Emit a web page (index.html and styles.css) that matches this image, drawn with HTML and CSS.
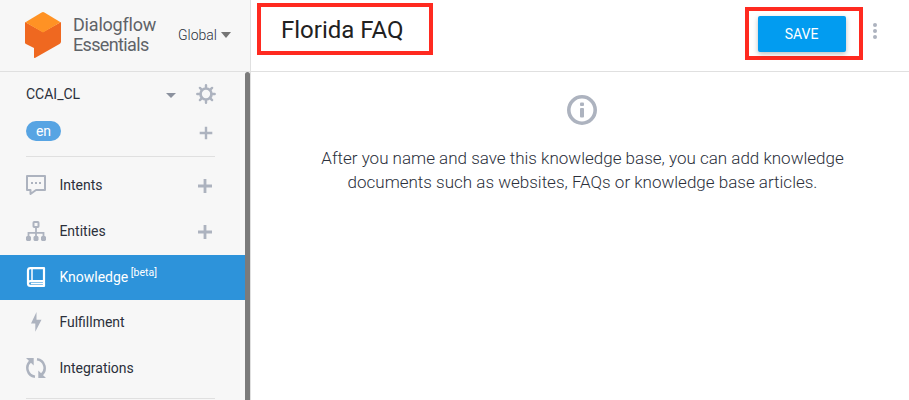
FILE: index.html
```html
<!DOCTYPE html>
<html lang="en">
<head>
<meta charset="utf-8">
<title>Dialogflow Essentials</title>
<link rel="stylesheet" href="styles.css">
</head>
<body>
<div class="app">
  <aside class="sidebar">
    <header class="brand">
      <svg class="logo" width="36" height="46" viewBox="0 0 36 46">
        <path fill="#ef6820" d="M0 10v20.500q0 1 1 1.600L9 36v9q0 1.500 1.300.8L34.500 32q1.500-.9 1.500-2.500V10L18 20z"/>
        <path fill="#ff9224" d="M.4 10.300 16.600.5q1.400-.8 2.800 0l16.200 9.800L18 20.500z"/>
      </svg>
      <div class="brand-name"><span class="brand-first">Dialogflow</span><span class="brand-second">Essentials</span></div>
      <div class="region"><span class="region-name">Global</span>
        <svg width="10" height="6" viewBox="0 0 10 6"><path fill="#757575" d="M0 0h10L5 6z"/></svg>
      </div>
    </header>
    <div class="side-body">
      <nav class="menu">
        <div class="agent">
          <span class="agent-name">CCAI_CL</span>
          <svg class="agent-arrow" width="10" height="5" viewBox="0 0 10 5"><path fill="#8b919e" d="M0 0h10L5 5z"/></svg>
          <svg class="gear" width="20" height="20" viewBox="0 0 20 20" fill="none" stroke="#adb3bf">
            <circle cx="10" cy="10" r="5.500" stroke-width="2.700"/>
            <path stroke-width="2.400" stroke-linecap="round" d="M10 3.500V1.300M10 16.500v2.200M3.500 10H1.300M16.500 10h2.200M5.400 5.400 3.900 3.900M14.600 14.600l1.500 1.500M5.400 14.600l-1.500 1.500M14.600 5.400l1.500-1.500"/>
          </svg>
        </div>
        <div class="language">
          <span class="chip">en</span>
          <svg width="14" height="14" viewBox="0 0 14 14"><path stroke="#adb3bf" stroke-width="2.400" d="M7 .7v12.600M.7 7h12.600"/></svg>
        </div>
        <hr class="rule">
        <div class="items">
          <a class="item">
            <svg class="icon" width="20" height="20" viewBox="0 0 20 20"><path fill="none" stroke="#adb3bf" stroke-width="2" stroke-linejoin="round" d="M1 1h18v14h-9l-5.500 4V15H1z"/><path fill="#adb3bf" d="M5 7h2v2H5zM9 7h2v2H9zM13 7h2v2h-2z"/></svg>
            <span class="label">Intents</span>
            <svg class="plus" width="14" height="14" viewBox="0 0 14 14"><path stroke="#adb3bf" stroke-width="2.800" d="M7 0v14M0 7h14"/></svg>
          </a>
          <a class="item">
            <svg class="icon" width="20" height="20" viewBox="0 0 20 20" fill="none" stroke="#adb3bf"><rect x="7.500" y="1" width="5" height="5" rx=".7" stroke-width="2"/><path stroke-width="1.800" d="M10 7v9M2.500 16v-4.200h15V16"/><path stroke="none" fill="#adb3bf" d="M1 15h3l1 1v3l-1 1H1l-1-1v-3zM8.500 15h3l1 1v3l-1 1h-3l-1-1v-3zM16 15h3l1 1v3l-1 1h-3l-1-1v-3z"/></svg>
            <span class="label">Entities</span>
            <svg class="plus" width="14" height="14" viewBox="0 0 14 14"><path stroke="#adb3bf" stroke-width="2.800" d="M7 0v14M0 7h14"/></svg>
          </a>
          <a class="item active">
            <svg class="icon" width="20" height="20" viewBox="0 0 20 20" fill="none" stroke="#fff"><path stroke-width="2.200" stroke-linejoin="round" d="M4.500 1.100H18v13H4.500A2.500 2.500 0 0 0 2 16.600V3.500A2.500 2.500 0 0 1 4.500 1.100zM2 16.500q0 2.400 2.500 2.400H18v-4.500"/><path stroke-width="1.500" d="M6 2v12M4.800 16.600H17"/></svg>
            <span class="label">Knowledge</span><span class="beta">[beta]</span>
          </a>
          <a class="item">
            <svg class="icon" width="20" height="20" viewBox="0 0 20 20"><path fill="#adb3bf" d="M10.500 0 5 11.500h4.300v8.200L15.500 7.700h-5z"/></svg>
            <span class="label">Fulfillment</span>
          </a>
          <a class="item">
            <svg class="icon" width="20" height="20" viewBox="0 0 20 20"><path fill="none" stroke="#adb3bf" stroke-width="2.500" d="M9 18.700C1.200 17.700-1.200 8 4.500 3.200M11 1.300c7.800 1 10.200 10.700 4.500 15.500"/><path fill="#adb3bf" d="M0 0h7.700v7.500zM20 20h-7.700v-7.500z"/></svg>
            <span class="label">Integrations</span>
          </a>
        </div>
        <hr class="rule">
      </nav>
      <div class="scrollbar"></div>
    </div>
  </aside>
  <main class="content">
    <header class="toolbar">
      <div class="marked title-box"><h1 class="title">Florida FAQ</h1></div>
      <div class="marked save-box"><button class="save">SAVE</button></div>
      <svg class="more" width="4" height="16" viewBox="0 0 4 16" fill="#adb3bf"><circle cx="2" cy="2" r="2"/><circle cx="2" cy="8" r="2"/><circle cx="2" cy="14" r="2"/></svg>
    </header>
    <section class="empty">
      <svg class="info" width="30" height="30" viewBox="0 0 30 30"><circle cx="15" cy="15" r="13.200" fill="none" stroke="#adb3bf" stroke-width="3.600"/><rect x="13" y="7.500" width="4" height="3.600" rx="1" fill="#adb3bf"/><rect x="13" y="13" width="4" height="9.500" rx="1" fill="#adb3bf"/></svg>
      <p class="message"><span>After you name and save this knowledge base, you can add knowledge</span><span>documents such as websites, FAQs or knowledge base articles.</span></p>
    </section>
  </main>
</div>
</body>
</html>
```
FILE: styles.css
```css
* { box-sizing: border-box; }
body { margin: 0; font-family: Roboto, "Liberation Sans", sans-serif; color: #2b303b; background: #fff; }
svg { display: block; flex: none; }
.app { display: grid; grid-template-columns: 251px 1fr; height: 400px; overflow: hidden; }
.sidebar { display: flex; flex-direction: column; min-height: 0; background: #f7f7f7; border-right: 1px solid #e0e0e0; }
.brand { display: flex; flex: none; height: 72px; padding: 12px 0 0 25px; border-bottom: 1px solid #e0e0e0; }
.brand-name { display: flex; flex: none; flex-direction: column; width: 117px; padding: 3px 0 0 12px; font-size: 18px; line-height: 20px; color: #5f6368; white-space: nowrap; }
.brand-first { letter-spacing: -0.2px; }
.brand-second { letter-spacing: -0.65px; }
.region { display: flex; gap: 4px; height: 20px; margin-top: 13px; font-size: 14px; font-weight: 300; line-height: 20px; color: #2b303b; }
.region svg { margin-top: 7px; }
.side-body { display: flex; flex: 1; min-height: 0; }
.menu { flex: 1; min-width: 0; }
.agent { display: flex; align-items: center; height: 20px; margin: 12px 29px 0 26px; font-size: 14px; }
.agent-arrow { margin-left: auto; margin-right: 20px; margin-top: 3px; }
.language { display: flex; justify-content: space-between; height: 20px; margin: 17px 32px 0 26px; }
.language svg { margin-top: 5px; }
.chip { width: 35px; height: 20px; border-radius: 10px; background: #57a4e3; color: #fff; font-size: 14px; line-height: 20px; text-align: center; }
.rule { height: 1px; margin: 15px 30px 0 26px; border: 0; background: #e0e0e0; }
.rule:last-child { margin-top: 8px; }
.items { padding-top: 5px; }
.item { display: flex; align-items: center; height: 45.700px; padding: 0 33px 0 26px; font-size: 14px; }
.icon { margin-right: 13.400px; }
.plus { margin: 2px 0 0 auto; }
.active { height: 45px; margin: 1.200px 0 -.5px; background: #2d93da; color: #fff; }
.beta { margin: -10px 0 0 2.500px; font-size: 10.500px; }
.scrollbar { width: 5px; background: #7b7b7b; border-radius: 3px 3px 0 0; }
.content { min-width: 0; }
.toolbar { display: flex; height: 72px; padding: 3px 32px 0 6px; border-bottom: 1px solid #e0e0e0; }
.marked { border: 4px solid #ff2a20; }
.title-box { width: 176px; height: 52px; padding-left: 20px; }
.title { margin: 0; font-size: 24px; line-height: 47px; font-weight: 400; color: #212121; }
.save-box { width: 118px; height: 53px; margin: 4px 10px 0 auto; padding: 5px 0 0 9px; }
.save { display: block; width: 88px; height: 36px; padding: 0 1px 0 0; border: 0; border-radius: 2px; background: #029cf0; color: #fff; font: 400 14px/36px Roboto, sans-serif; box-shadow: 0 2px 5px rgba(0,0,0,.26); }
.more { margin-top: 20px; }
.empty { display: flex; flex-direction: column; align-items: center; padding-top: 23px; padding-right: 4px; }
.info { margin-left: 8px; }
.message { display: flex; flex-direction: column; align-items: center; margin: 21px 0 0; padding-left: 9px; font-size: 17px; line-height: 24px; font-weight: 300; white-space: nowrap; }
```
